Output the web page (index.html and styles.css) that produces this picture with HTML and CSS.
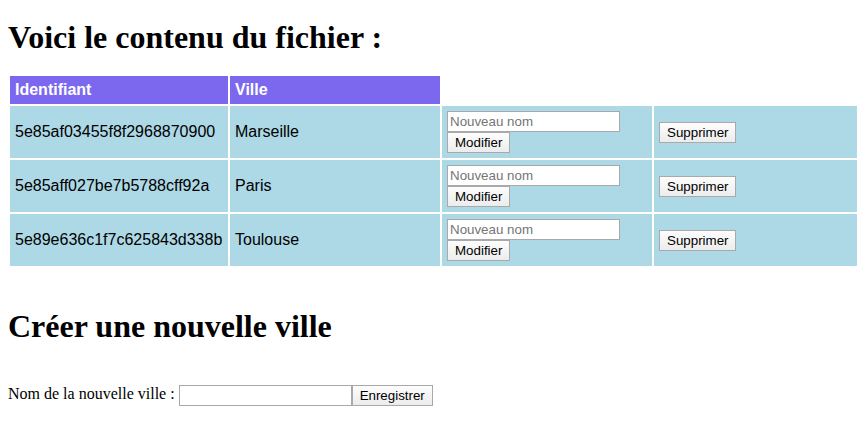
FILE: index.html
```html
<!DOCTYPE html>
<html lang="fr">
<head>
<meta charset="utf-8">
<title>Villes</title>
<link rel="stylesheet" href="styles.css">
</head>
<body>
<h1 class="title first">Voici le contenu du fichier :</h1>
<table class="cities">
  <colgroup>
    <col class="c-id"><col class="c-city"><col class="c-edit"><col class="c-del">
  </colgroup>
  <thead>
    <tr><th>Identifiant</th><th>Ville</th></tr>
  </thead>
  <tbody>
    <tr>
      <td>5e85af03455f8f2968870900</td>
      <td>Marseille</td>
      <td><input class="field" type="text" placeholder="Nouveau nom"><br><button class="btn">Modifier</button></td>
      <td><button class="btn">Supprimer</button></td>
    </tr>
    <tr>
      <td>5e85aff027be7b5788cff92a</td>
      <td>Paris</td>
      <td><input class="field" type="text" placeholder="Nouveau nom"><br><button class="btn">Modifier</button></td>
      <td><button class="btn">Supprimer</button></td>
    </tr>
    <tr>
      <td>5e89e636c1f7c625843d338b</td>
      <td>Toulouse</td>
      <td><input class="field" type="text" placeholder="Nouveau nom"><br><button class="btn">Modifier</button></td>
      <td><button class="btn">Supprimer</button></td>
    </tr>
  </tbody>
</table>
<h1 class="title second">Créer une nouvelle ville</h1>
<form class="create">
  <label>Nom de la nouvelle ville : <input class="field" type="text"></label><button class="btn" type="button">Enregistrer</button>
</form>
</body>
</html>
```
FILE: styles.css
```css
html {
  overflow: hidden;
}
body {
  margin: 8px;
  min-width: 880px;
  font-family: "Liberation Serif", "Times New Roman", serif;
  font-size: 16px;
  color: #000;
  background: #fff;
}
.title {
  font-size: 32px;
  font-weight: bold;
  margin: 18px 0 18px;
  line-height: 37px;
}
.first {
  margin-top: 11px;
}
.cities {
  border-spacing: 2px;
  width: 858px;
  min-width: 858px;
  table-layout: fixed;
  font-family: "Liberation Sans", Arial, sans-serif;
  font-size: 16px;
}
.c-id { width: 218px; }
.c-city { width: 210px; }
.c-edit { width: 210px; }
.c-del { width: 210px; }
.cities th {
  background: #7b68ee;
  color: #fff;
  text-align: left;
  padding: 5px;
  font-weight: bold;
  line-height: 18px;
}
.cities td {
  background: #add8e6;
  padding: 5px;
  line-height: 18px;
  vertical-align: middle;
}
.field {
  font-family: "Liberation Sans", Arial, sans-serif;
  font-size: 13.333px;
  width: 173px;
  height: 21px;
  box-sizing: border-box;
  border: 1px solid #a9a9a9;
  padding: 1px 2px;
  margin: 0;
  background: #fff;
  vertical-align: middle;
}
.field::placeholder {
  color: #757575;
}
.btn {
  font-family: "Liberation Sans", Arial, sans-serif;
  font-size: 13.333px;
  height: 21px;
  box-sizing: border-box;
  border: 1px solid #a9a9a9;
  background: linear-gradient(#fdfdfd, #ececec);
  color: #000;
  padding: 1px 7px;
  margin: 0;
  vertical-align: middle;
  line-height: 15px;
}
.cities .btn {
  display: inline-block;
}
.second {
  margin-top: 40px;
  margin-bottom: 40px;
}
.create {
  margin: 0;
}
```
